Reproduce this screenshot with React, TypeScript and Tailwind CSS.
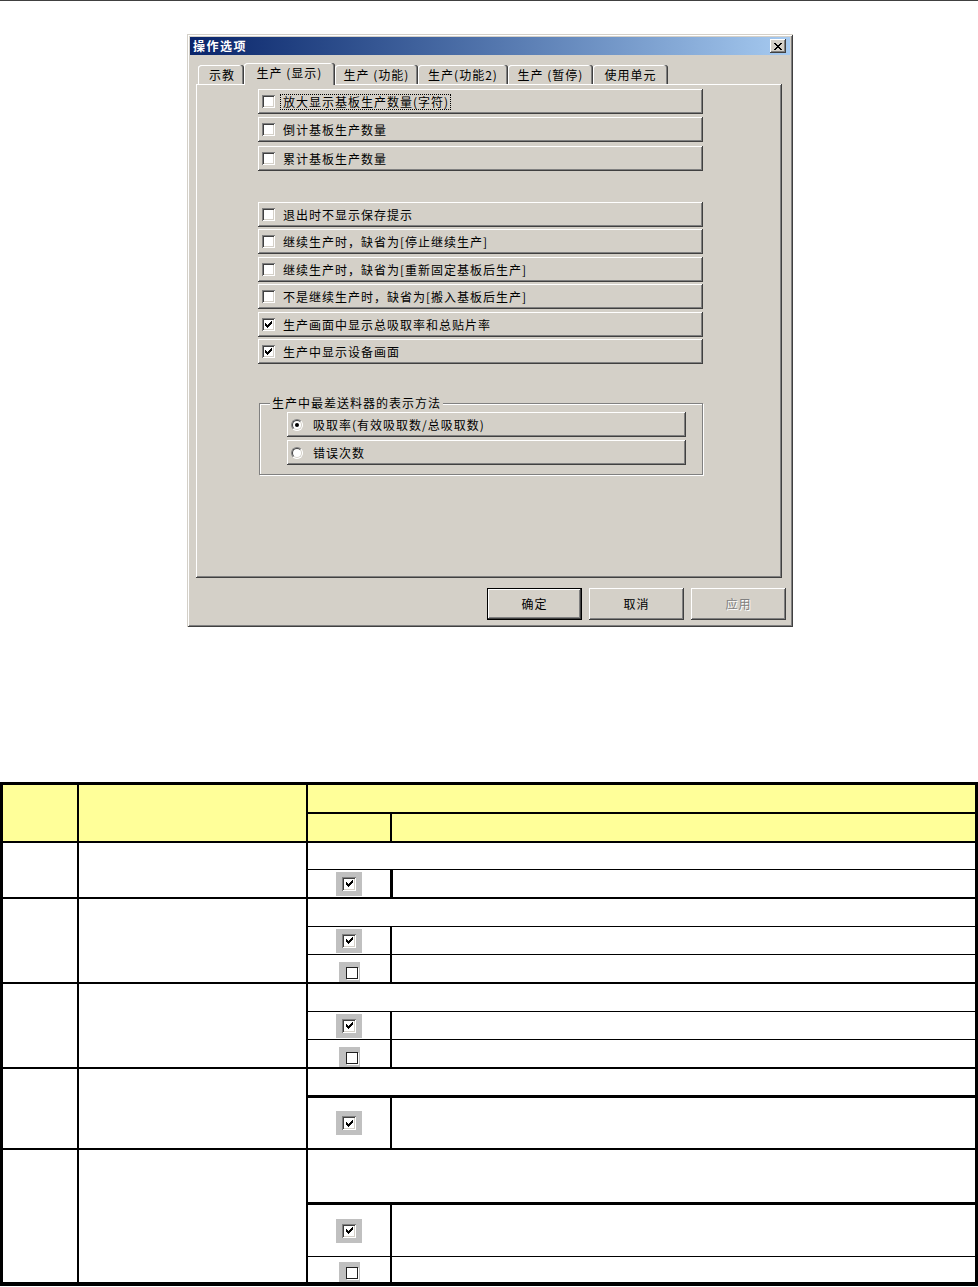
import React from "react";

const RAISED =
  "shadow-[inset_-1px_-1px_0_#404040,inset_1px_1px_0_#ffffff,inset_-2px_-2px_0_#808080]";
const SUNKEN_BOX =
  "shadow-[inset_1px_1px_0_#808080,inset_-1px_-1px_0_#ffffff,inset_2px_2px_0_#404040,inset_-2px_-2px_0_#d4d0c8]";

function Check() {
  return (
    <svg width="7" height="7" viewBox="0 0 7 7" shapeRendering="crispEdges" className="block">
      <rect x="6" y="0" width="1" height="1" fill="#000" />
      <rect x="5" y="1" width="2" height="1" fill="#000" />
      <rect x="0" y="2" width="1" height="1" fill="#000" />
      <rect x="4" y="2" width="3" height="1" fill="#000" />
      <rect x="0" y="3" width="2" height="1" fill="#000" />
      <rect x="3" y="3" width="3" height="1" fill="#000" />
      <rect x="0" y="4" width="5" height="1" fill="#000" />
      <rect x="1" y="5" width="3" height="1" fill="#000" />
      <rect x="2" y="6" width="1" height="1" fill="#000" />
    </svg>
  );
}

function CloseGlyph() {
  return (
    <svg width="8" height="7" viewBox="0 0 8 7" shapeRendering="crispEdges" className="block">
      <rect x="0" y="0" width="2" height="1" />
      <rect x="6" y="0" width="2" height="1" />
      <rect x="1" y="1" width="2" height="1" />
      <rect x="5" y="1" width="2" height="1" />
      <rect x="2" y="2" width="4" height="1" />
      <rect x="3" y="3" width="2" height="1" />
      <rect x="2" y="4" width="4" height="1" />
      <rect x="1" y="5" width="2" height="1" />
      <rect x="5" y="5" width="2" height="1" />
      <rect x="0" y="6" width="2" height="1" />
      <rect x="6" y="6" width="2" height="1" />
    </svg>
  );
}

function CheckBox({ checked }: { checked: boolean }) {
  return (
    <div className={`w-[13px] h-[13px] shrink-0 bg-white flex items-center justify-center ${SUNKEN_BOX}`}>
      {checked && <Check />}
    </div>
  );
}

function OptRow({
  label,
  checked = false,
  focus = false,
  className = "",
}: {
  label: string;
  checked?: boolean;
  focus?: boolean;
  className?: string;
}) {
  return (
    <div className={`h-[25px] w-[445px] flex items-center pl-[4px] bg-[#d4d0c8] ${RAISED} ${className}`}>
      <CheckBox checked={checked} />
      <span
        className={`ml-[5px] pl-[2px] pr-[1px] leading-[14px] tracking-[1px] border ${
          focus ? "border-dotted border-black" : "border-transparent"
        }`}
      >
        {label}
      </span>
    </div>
  );
}

function Radio({ on }: { on: boolean }) {
  return (
    <div className="relative w-[12px] h-[12px] shrink-0 rounded-full bg-white border border-t-[#808080] border-l-[#808080] border-b-white border-r-white">
      <div className="absolute inset-0 rounded-full border border-t-[#404040] border-l-[#404040] border-b-[#d4d0c8] border-r-[#d4d0c8] flex items-center justify-center">
        {on && <div className="w-[4px] h-[4px] rounded-full bg-black" />}
      </div>
    </div>
  );
}

function RadioRow({ label, on, className = "" }: { label: string; on: boolean; className?: string }) {
  return (
    <div className={`h-[25px] w-[399px] flex items-center pl-[4px] ${RAISED} ${className}`}>
      <Radio on={on} />
      <span className="ml-[10px] leading-[14px] tracking-[1px]">{label}</span>
    </div>
  );
}

const TAB_INACTIVE =
  "h-[19px] rounded-t-[3px] flex items-center justify-center shadow-[inset_-1px_0_0_#404040,inset_-2px_0_0_#808080,inset_1px_1px_0_#ffffff]";

function Dialog() {
  return (
    <div className="w-[606px] h-[593px] bg-[#d4d0c8] p-[3px] flex flex-col shadow-[inset_1px_1px_0_#d4d0c8,inset_-1px_-1px_0_#404040,inset_2px_2px_0_#ffffff,inset_-2px_-2px_0_#808080]">
      {/* title bar */}
      <div className="h-[18px] bg-linear-to-r from-[#0a246a] to-[#a6caf0] flex items-center pl-[3px] pr-[4px]">
        <span className="text-white font-bold tracking-[1.5px] leading-[14px]">操作选项</span>
        <div className="flex-1" />
        <div className={`w-[16px] h-[14px] bg-[#d4d0c8] flex items-center justify-center ${RAISED}`}>
          <CloseGlyph />
        </div>
      </div>

      {/* tabs */}
      <div className="relative z-10 flex items-end h-[21px] mt-[8px] pl-[8px]">
        <div className={`w-[46px] ${TAB_INACTIVE}`}>
          <span className="tracking-[1px] pl-[2px]">示教</span>
        </div>
        <div className="w-[91px] h-[22px] -mb-[1px] rounded-t-[3px] bg-[#d4d0c8] flex items-start justify-center pt-[3px] shadow-[inset_-1px_0_0_#404040,inset_-2px_0_0_#808080,inset_1px_1px_0_#ffffff]">
          <span className="tracking-[1px]">生产 (显示)</span>
        </div>
        <div className={`w-[83px] ${TAB_INACTIVE}`}>
          <span className="tracking-[1px]">生产 (功能)</span>
        </div>
        <div className={`w-[90px] ${TAB_INACTIVE}`}>
          <span className="tracking-[1px]">生产(功能2)</span>
        </div>
        <div className={`w-[85px] ${TAB_INACTIVE}`}>
          <span className="tracking-[1px]">生产 (暂停)</span>
        </div>
        <div className={`w-[75px] ${TAB_INACTIVE}`}>
          <span className="tracking-[1px]">使用单元</span>
        </div>
      </div>

      {/* panel */}
      <div className="ml-[6px] w-[586px] h-[494px] pt-[5px] pl-[62px] flex flex-col shadow-[inset_-1px_-1px_0_#404040,inset_1px_1px_0_#ffffff,inset_-2px_-2px_0_#808080]">
        <OptRow label="放大显示基板生产数量(字符)" focus />
        <OptRow label="倒计基板生产数量" className="mt-[3px]" />
        <OptRow label="累计基板生产数量" className="mt-[4px]" />

        <OptRow label="退出时不显示保存提示" className="mt-[31px]" />
        <OptRow label="继续生产时，缺省为[停止继续生产]" className="mt-[2px]" />
        <OptRow label="继续生产时，缺省为[重新固定基板后生产]" className="mt-[3px]" />
        <OptRow label="不是继续生产时，缺省为[搬入基板后生产]" className="mt-[2px]" />
        <OptRow label="生产画面中显示总吸取率和总贴片率" checked className="mt-[3px]" />
        <OptRow label="生产中显示设备画面" checked className="mt-[2px]" />

        <div className="relative mt-[39px] ml-[1px] w-[444px] h-[72px] border border-[#808080] shadow-[inset_1px_1px_0_#ffffff,1px_1px_0_#ffffff] pt-[8px] pl-[27px] flex flex-col">
          <span className="absolute -top-[8px] left-[10px] px-[2px] bg-[#d4d0c8] leading-[14px] tracking-[1px]">
            生产中最差送料器的表示方法
          </span>
          <RadioRow label="吸取率(有效吸取数/总吸取数)" on />
          <RadioRow label="错误次数" on={false} className="mt-[3px]" />
        </div>
      </div>

      {/* buttons */}
      <div className="flex justify-end gap-[7px] mt-[10px] pr-[4px]">
        <div className="w-[95px] h-[32px] border border-black">
          <div className={`w-full h-full flex items-center justify-center ${RAISED}`}>
            <span className="tracking-[1px]">确定</span>
          </div>
        </div>
        <div className={`w-[95px] h-[32px] flex items-center justify-center ${RAISED}`}>
          <span className="tracking-[1px]">取消</span>
        </div>
        <div className={`w-[95px] h-[32px] flex items-center justify-center ${RAISED}`}>
          <span className="tracking-[1px] text-[#808080] [text-shadow:1px_1px_0_#ffffff]">应用</span>
        </div>
      </div>
    </div>
  );
}

function TblChecked() {
  return (
    <div className="w-[26px] h-[24px] bg-[#c0c0c0] flex items-center justify-center">
      <div className={`w-[14px] h-[14px] bg-white flex items-center justify-center ${SUNKEN_BOX}`}>
        <Check />
      </div>
    </div>
  );
}

function TblUnchecked() {
  return (
    <div className="w-[21px] h-[20px] bg-[#c0c0c0] pl-[7px] pt-[5px]">
      <div className="w-[12px] h-[12px] bg-white border border-[#202020] shadow-[1px_1px_0_#ffffff]" />
    </div>
  );
}

function Table() {
  return (
    <div className="mt-[155px] w-[978px] border-black border-l-[3px] border-r-[3px] border-t-[3px] border-b-[4px]">
      {/* header */}
      <div className="flex h-[58px] border-b-2 border-black bg-[#ffff99]">
        <div className="w-[76px] border-r-2 border-black" />
        <div className="w-[229px] border-r-2 border-black" />
        <div className="flex-1 flex flex-col">
          <div className="h-[29px] border-b-2 border-black" />
          <div className="flex-1 flex">
            <div className="w-[84px] border-r-2 border-black" />
            <div className="flex-1" />
          </div>
        </div>
      </div>

      {/* row 1 */}
      <div className="flex h-[56px] border-b-2 border-black">
        <div className="w-[76px] border-r-2 border-black" />
        <div className="w-[229px] border-r-2 border-black" />
        <div className="flex-1 flex flex-col">
          <div className="h-[27px] border-b border-black" />
          <div className="flex-1 flex">
            <div className="w-[85px] border-r-[3px] border-black flex items-center justify-center">
              <TblChecked />
            </div>
            <div className="flex-1" />
          </div>
        </div>
      </div>

      {/* row 2 */}
      <div className="flex h-[85px] border-b-2 border-black">
        <div className="w-[76px] border-r-2 border-black" />
        <div className="w-[229px] border-r-2 border-black" />
        <div className="flex-1 flex flex-col">
          <div className="h-[28px] border-b border-black" />
          <div className="h-[28px] flex border-b border-black">
            <div className="w-[84px] border-r-2 border-black flex items-center justify-center">
              <TblChecked />
            </div>
            <div className="flex-1" />
          </div>
          <div className="flex-1 flex">
            <div className="w-[84px] border-r-2 border-black flex items-end justify-center">
              <TblUnchecked />
            </div>
            <div className="flex-1" />
          </div>
        </div>
      </div>

      {/* row 3 */}
      <div className="flex h-[85px] border-b-2 border-black">
        <div className="w-[76px] border-r-2 border-black" />
        <div className="w-[229px] border-r-2 border-black" />
        <div className="flex-1 flex flex-col">
          <div className="h-[28px] border-b border-black" />
          <div className="h-[28px] flex border-b border-black">
            <div className="w-[84px] border-r-2 border-black flex items-center justify-center">
              <TblChecked />
            </div>
            <div className="flex-1" />
          </div>
          <div className="flex-1 flex">
            <div className="w-[84px] border-r-2 border-black flex items-end justify-center">
              <TblUnchecked />
            </div>
            <div className="flex-1" />
          </div>
        </div>
      </div>

      {/* row 4 */}
      <div className="flex h-[81px] border-b-2 border-black">
        <div className="w-[76px] border-r-2 border-black" />
        <div className="w-[229px] border-r-2 border-black" />
        <div className="flex-1 flex flex-col">
          <div className="h-[29px] border-b-[3px] border-black" />
          <div className="flex-1 flex">
            <div className="w-[84px] border-r-2 border-black flex items-center justify-center">
              <TblChecked />
            </div>
            <div className="flex-1" />
          </div>
        </div>
      </div>

      {/* row 5 */}
      <div className="flex h-[132px]">
        <div className="w-[76px] border-r-2 border-black" />
        <div className="w-[229px] border-r-2 border-black" />
        <div className="flex-1 flex flex-col">
          <div className="h-[55px] border-b-[3px] border-black" />
          <div className="h-[52px] flex border-b border-black">
            <div className="w-[84px] border-r-2 border-black flex items-center justify-center">
              <TblChecked />
            </div>
            <div className="flex-1" />
          </div>
          <div className="flex-1 flex">
            <div className="w-[84px] border-r-2 border-black flex items-end justify-center">
              <TblUnchecked />
            </div>
            <div className="flex-1" />
          </div>
        </div>
      </div>
    </div>
  );
}

export default function App() {
  return (
    <div className="w-[978px] h-[1287px] bg-white overflow-hidden text-[12px] leading-[14px] text-black font-['Noto_Sans_CJK_SC','Noto_Sans',sans-serif]">
      <div className="h-[1px] bg-[#404040]" />
      <div className="pt-[33px] pl-[187px]">
        <Dialog />
      </div>
      <Table />
    </div>
  );
}
